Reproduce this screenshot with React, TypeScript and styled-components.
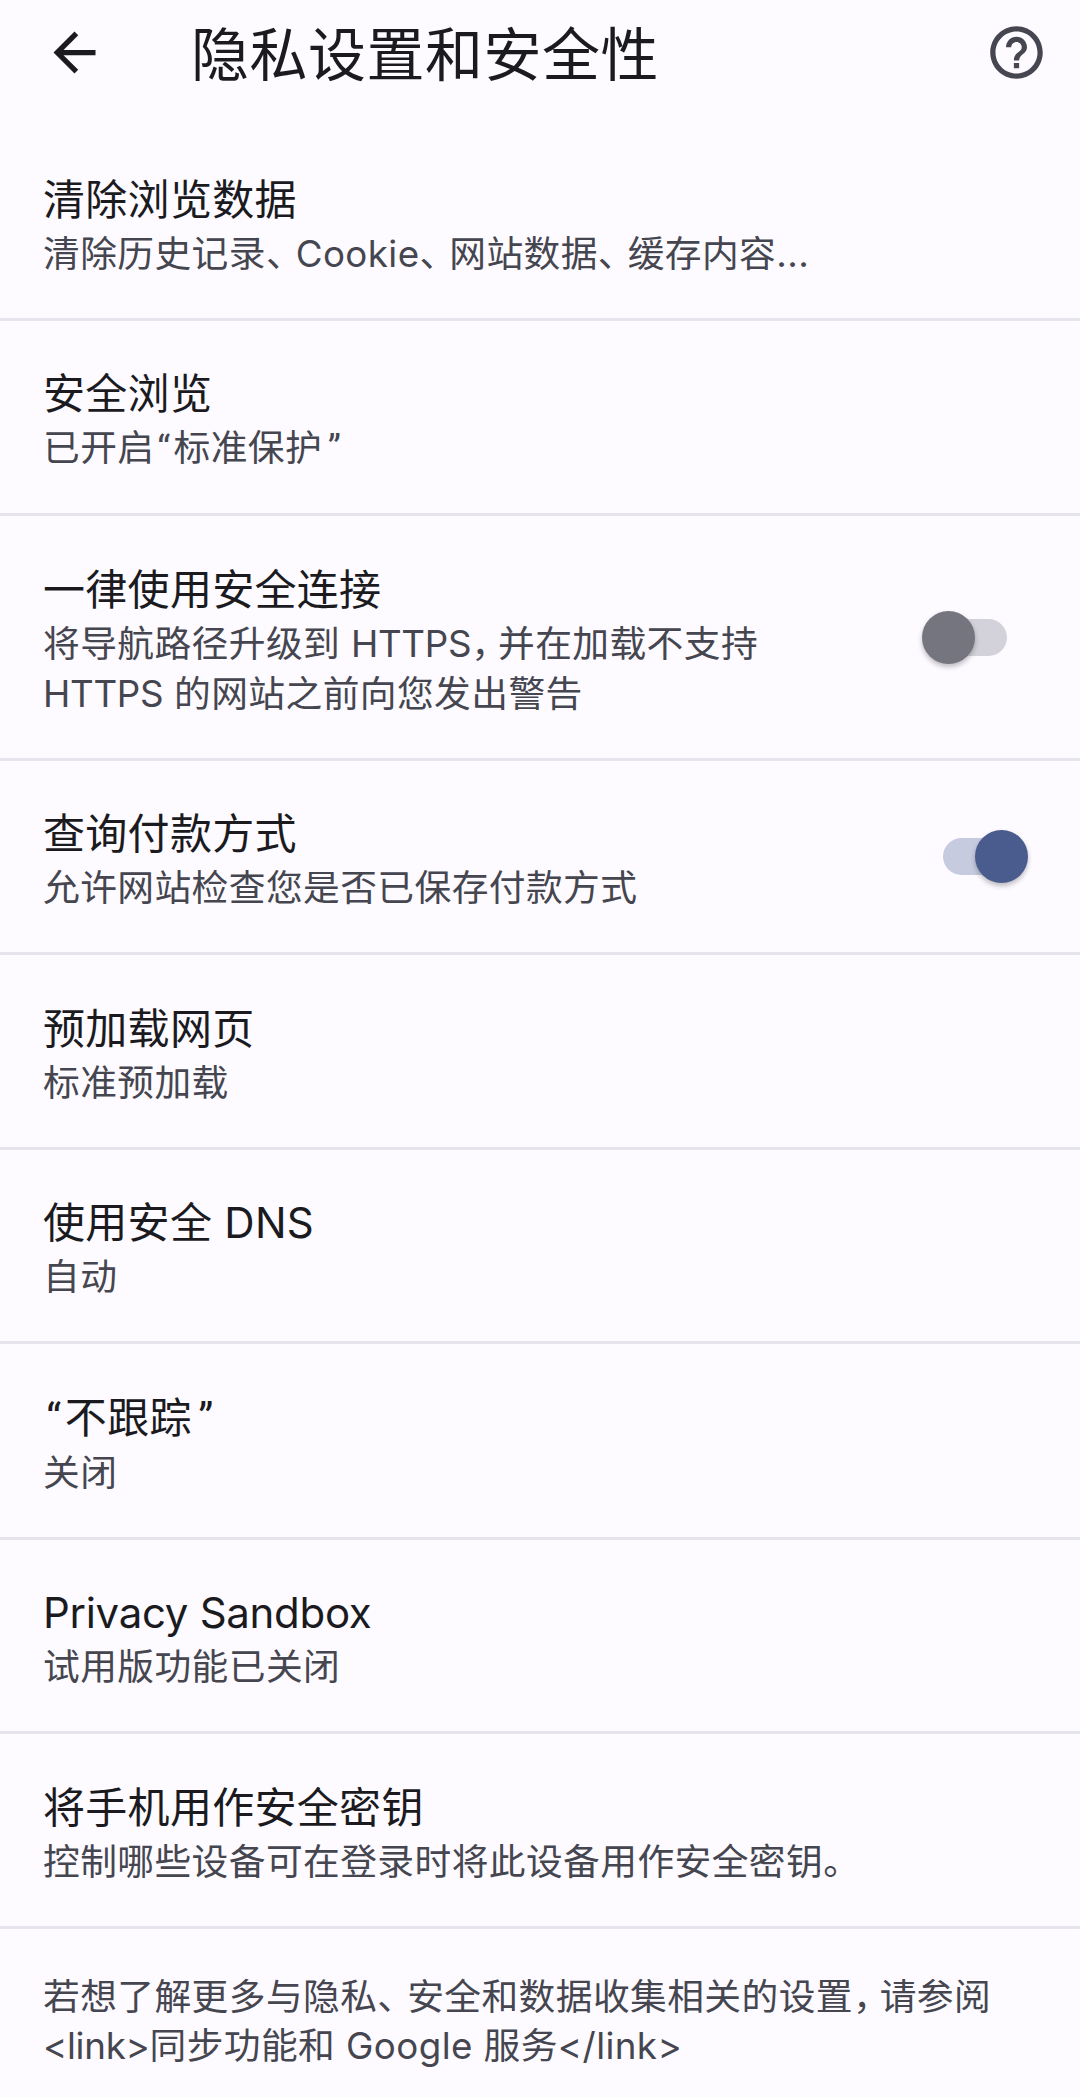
import { FC, ReactNode } from "react";
import styled, { createGlobalStyle } from "styled-components";

const GlobalStyle = createGlobalStyle`
    html, body {
        margin: 0;
        padding: 0;
        background-color: #fdfbff;
    }
`;

const Page = styled.div`
    width: 1080px;
    min-height: 2097px;
    background-color: #fdfbff;
    font-family: "Inter", "Noto Sans CJK SC", sans-serif;
    overflow: hidden;
`;

const Toolbar = styled.header`
    height: 104px;
    padding: 0 32px 0 43px;
    margin-bottom: 22px;
    box-sizing: border-box;
    display: flex;
    align-items: center;
`;

const IconButton = styled.div`
    width: 63px;
    height: 63px;
    display: flex;
`;

const Heading = styled.h1`
    flex: 1;
    margin: 6px 0 0 85px;
    font-size: 58px;
    font-weight: 400;
    line-height: 63px;
    letter-spacing: 0.5px;
    color: #1b1b1f;
`;

const Row = styled.section`
    padding: 44.5px 0 39px 43px;
    border-bottom: 3px solid #e6e4ec;
    display: flex;
    align-items: center;
    justify-content: space-between;
`;

const RowText = styled.div`
    min-width: 0;
`;

const RowTitle = styled.div`
    font-size: 42px;
    line-height: 58px;
    letter-spacing: 0.3px;
    color: #1b1b1f;
`;

const RowSummary = styled.div`
    font-size: 36.75px;
    line-height: 50px;
    letter-spacing: 0.4px;
    color: #45464f;
    white-space: nowrap;
`;

/* enumeration comma set tight against the next character */
const Mark = styled.span`
    letter-spacing: -7px;
`;

const Comma = styled.span`
    letter-spacing: -10px;
`;

/* curly quotes sit in a box of about half an em */
const Quote = styled.span<{ closing?: boolean }>`
    display: inline-block;
    width: 0.52em;
    font-family: "Roboto", sans-serif;
    text-align: ${(props) => (props.closing ? "right" : "center")};
`;

/* latin runs a little tighter than the Chinese around it */
const Latin = styled.span`
    letter-spacing: -0.3px;
`;

const Track = styled.div<{ checked: boolean }>`
    position: relative;
    width: 64px;
    height: 37px;
    margin: 0 73px 5px 0;
    border-radius: 19px;
    background-color: ${(props) => (props.checked ? "#c6cbe0" : "#d3d1d9")};
`;

const Thumb = styled.div<{ checked: boolean }>`
    position: absolute;
    top: -8px;
    left: ${(props) => (props.checked ? "32px" : "-21px")};
    width: 53px;
    height: 53px;
    border-radius: 50%;
    background-color: ${(props) => (props.checked ? "#4a5b8e" : "#74757e")};
    box-shadow: 0 3px 5px rgba(0, 0, 0, 0.25);
`;

const Footer = styled.footer`
    padding: 43px 43px 0;
`;

const FooterLine = styled.div`
    font-size: 36.75px;
    line-height: 49.5px;
    letter-spacing: 0.4px;
    color: #45464f;
    white-space: nowrap;
`;

interface SettingItem {
    id: string;
    title: ReactNode;
    lines: ReactNode[];
    toggle?: "on" | "off";
}

const settings: SettingItem[] = [
    {
        id: "clear",
        title: "清除浏览数据",
        lines: [<>清除历史记录<Mark>、</Mark>Cookie<Mark>、</Mark>网站数据<Mark>、</Mark>缓存内容...</>],
    },
    { id: "safe", title: "安全浏览", lines: [<>已开启<Quote>“</Quote>标准保护<Quote closing>”</Quote></>] },
    {
        id: "https",
        title: "一律使用安全连接",
        lines: [
            <>将导航路径升级到 <Latin>HTTPS</Latin><Comma>，</Comma>并在加载不支持</>,
            <><Latin>HTTPS</Latin> 的网站之前向您发出警告</>,
        ],
        toggle: "off",
    },
    { id: "payment", title: "查询付款方式", lines: ["允许网站检查您是否已保存付款方式"], toggle: "on" },
    { id: "preload", title: "预加载网页", lines: ["标准预加载"] },
    { id: "dns", title: "使用安全 DNS", lines: ["自动"] },
    { id: "dnt", title: <><Quote>“</Quote>不跟踪<Quote closing>”</Quote></>, lines: ["关闭"] },
    { id: "sandbox", title: <Latin>Privacy Sandbox</Latin>, lines: ["试用版功能已关闭"] },
    { id: "key", title: "将手机用作安全密钥", lines: ["控制哪些设备可在登录时将此设备用作安全密钥。"] },
];

const App: FC = () => {
    return (
        <Page lang="zh-CN">
            <GlobalStyle />
            <Toolbar>
                <IconButton aria-label="返回">
                    <svg viewBox="0 0 24 24" width="63" height="63" fill="#1b1b1f">
                        <path d="M20 11H7.83l5.59-5.59L12 4l-8 8 8 8 1.41-1.41L7.83 13H20v-2z" />
                    </svg>
                </IconButton>
                <Heading>隐私设置和安全性</Heading>
                <IconButton aria-label="帮助">
                    <svg viewBox="0 0 24 24" width="63" height="63" fill="#45464f">
                        <path d="M11 18h2v-2h-2v2zm1-16C6.48 2 2 6.48 2 12s4.48 10 10 10 10-4.48 10-10S17.52 2 12 2zm0 18c-4.41 0-8-3.59-8-8s3.59-8 8-8 8 3.59 8 8-3.59 8-8 8zm0-14c-2.21 0-4 1.79-4 4h2c0-1.1.9-2 2-2s2 .9 2 2c0 2-3 1.75-3 5h2c0-2.25 3-2.5 3-5 0-2.21-1.79-4-4-4z" />
                    </svg>
                </IconButton>
            </Toolbar>
            <main>
                {settings.map((item) => (
                    <Row key={item.id}>
                        <RowText>
                            <RowTitle>{item.title}</RowTitle>
                            {item.lines.map((line, index) => (
                                <RowSummary key={index}>{line}</RowSummary>
                            ))}
                        </RowText>
                        {item.toggle && (
                            <Track checked={item.toggle === "on"}>
                                <Thumb checked={item.toggle === "on"} />
                            </Track>
                        )}
                    </Row>
                ))}
            </main>
            <Footer>
                <FooterLine>若想了解更多与隐私<Mark>、</Mark>安全和数据收集相关的设置<Comma>，</Comma>请参阅</FooterLine>
                <FooterLine><Latin>{"<link>"}</Latin>同步功能和 Google 服务{"</link>"}</FooterLine>
            </Footer>
        </Page>
    );
};

export default App;
